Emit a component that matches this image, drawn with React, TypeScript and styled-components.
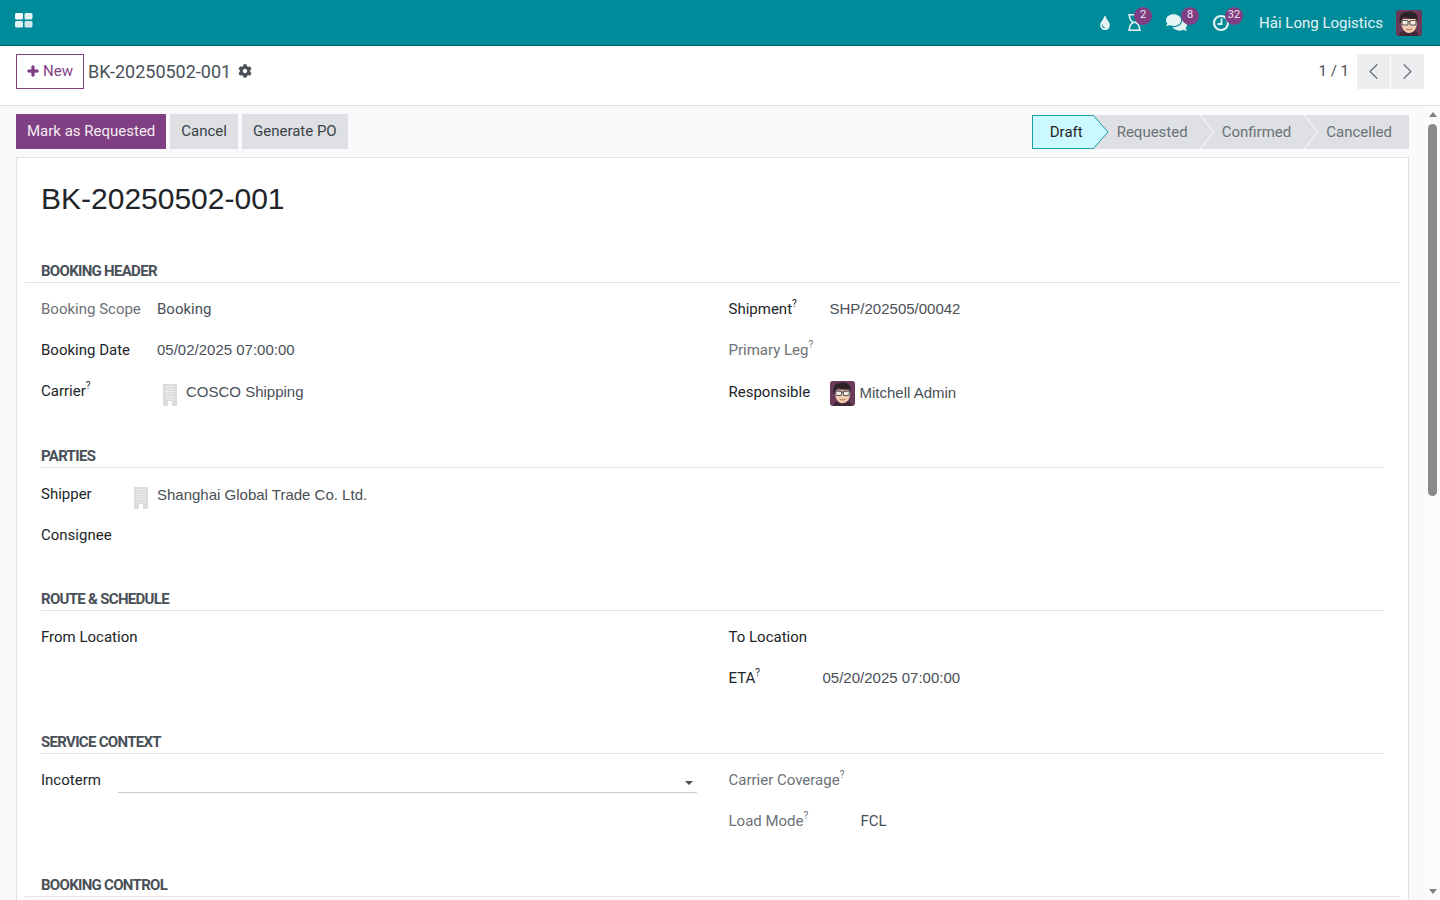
import styled, { createGlobalStyle } from "styled-components";
import { ReactNode } from "react";
import { FaCog, FaComments, FaPlus, FaRegHourglass, FaTint } from "react-icons/fa";
import { ChevronLeft, ChevronRight } from "lucide-react";

const GlobalStyle = createGlobalStyle`
  html, body {
    margin: 0;
    height: 100%;
    overflow: hidden;
  }
  body {
    font-family: Roboto, "Liberation Sans", sans-serif;
    font-size: 15px;
    color: #212529;
  }
  * {
    box-sizing: border-box;
  }
`;

const AppsIcon = () => (
  <svg width="18" height="15" viewBox="0 0 18 15">
    <rect x="0" y="0" width="8" height="6.5" rx="1.5" fill="#fff" />
    <rect x="9.500" y="0" width="8" height="6.5" rx="1.5" fill="#e3f3f4" />
    <rect x="0" y="8" width="8" height="6.5" rx="1.5" fill="#e3f3f4" />
    <rect x="9.500" y="8" width="8" height="6.5" rx="1.5" fill="#cfe9eb" />
  </svg>
);

const ClockIcon = () => (
  <svg width="18" height="18" viewBox="0 0 18 18" fill="none" stroke="currentColor">
    <circle cx="9" cy="9" r="7" strokeWidth="2.200" />
    <path d="M9.500 4.500V10H5.500" strokeWidth="1.800" />
  </svg>
);

const Avatar = ({ size }: { size: number }) => (
  <svg width={size} height={size} viewBox="0 0 26 26">
    <rect width="26" height="26" rx="3" fill="#6a3a58" />
    <path d="M3 26c1-4 4-6 10-6s9 2 10 6z" fill="#43293a" />
    <path d="M5 9c-.5 8 3 14.500 8.500 14s8-6 7.500-14z" fill="#f4cdb0" />
    <path d="M4 13C2 6 6 1.500 11 2c5-1.500 11 1 10.500 7.500l-.5 3.500-1.500-4.500C15 9 11 8.500 8 6.500 7.500 9 5.500 10 5 13z" fill="#2c2327" />
    <rect x="6" y="10.500" width="6" height="4.500" rx="1" fill="#f3ebe4" stroke="#55585c" strokeWidth="1.100" />
    <rect x="14" y="10.500" width="6" height="4.500" rx="1" fill="#f3ebe4" stroke="#55585c" strokeWidth="1.100" />
    <path d="M12 11.500h2" stroke="#55585c" strokeWidth="1.100" />
    <path d="M10 19c1.500 1 4 1 6 0" stroke="#a8614c" strokeWidth="1" fill="none" />
  </svg>
);

const BuildingIcon = () => (
  <BuildingSvg width="14" height="22" viewBox="0 0 14 22">
    <path d="M0 0h14v22H9v-5H5v5H0z" fill="#dcdcdc" />
    <path
      d="M2.500 2.500h9M2.500 5h9M2.500 7.500h9M2.500 10h9M2.500 12.500h9M2.500 15h9"
      stroke="#f1f1f1"
      strokeWidth="1"
      strokeDasharray="2.500 0.700"
    />
  </BuildingSvg>
);

const Arrow = ({ active }: { active?: boolean }) => (
  <ArrowSvg width="16" height="34" viewBox="0 0 16 34" $active={active}>
    {active ? (
      <>
        <path d="M0 0 15 17 0 34z" fill="#ccf9ff" />
        <path d="M0 0 15 17 0 34" fill="none" stroke="#17a2a8" strokeWidth="1" />
      </>
    ) : (
      <path d="M0 0 14 17 0 34" fill="#dee0e4" stroke="#fff" strokeWidth="1" />
    )}
  </ArrowSvg>
);

const steps = [
  { name: "Draft", left: 17, right: 10, active: true },
  { name: "Requested", left: 24, right: 12 },
  { name: "Confirmed", left: 22, right: 13 },
  { name: "Cancelled", left: 22, right: 17, last: true },
];

type FieldProps = {
  label: string;
  help?: boolean;
  muted?: boolean;
  low?: boolean;
  width: number;
  children?: ReactNode;
};

const Field = ({ label, help, muted, low, width, children }: FieldProps) => (
  <Row>
    <Label $muted={muted} $low={low} $width={width}>
      {label}
      {help && <Help>?</Help>}
    </Label>
    {children}
  </Row>
);

const Section = ({ title, wide, children }: { title: string; wide?: boolean; children?: ReactNode }) => (
  <SectionBox $wide={wide}>
    <SectionTitle $wide={wide}>{title}</SectionTitle>
    {children && <Columns>{children}</Columns>}
  </SectionBox>
);

export default function App() {
  return (
    <Page>
      <GlobalStyle />
      <Navbar>
        <AppsButton>
          <AppsIcon />
        </AppsButton>
        <Systray>
          <TrayItem $width={30}>
            <FaTint size={14} />
          </TrayItem>
          <TrayItem $width={29}>
            <FaRegHourglass size={17} />
            <Badge $right={-3}>2</Badge>
          </TrayItem>
          <TrayItem $width={57}>
            <CommentsIcon size={21} />
            <Badge $right={7}>8</Badge>
          </TrayItem>
          <TrayItem $width={30}>
            <ClockIcon />
            <Badge $right={-7}>32</Badge>
          </TrayItem>
          <Company>Hải Long Logistics</Company>
          <UserAvatar>
            <Avatar size={26} />
          </UserAvatar>
        </Systray>
      </Navbar>

      <ControlPanel>
        <Breadcrumb>
          <NewButton>
            <PlusIcon size={12} />
            New
          </NewButton>
          <RecordName>BK-20250502-001</RecordName>
          <GearIcon>
            <FaCog size={14} />
          </GearIcon>
        </Breadcrumb>
        <Pager>
          <PagerText>1 / 1</PagerText>
          <PagerButtons>
            <PagerButton>
              <ChevronLeft size={27} strokeWidth={1.1} />
            </PagerButton>
            <PagerButton>
              <ChevronRight size={27} strokeWidth={1.1} />
            </PagerButton>
          </PagerButtons>
        </Pager>
      </ControlPanel>

      <Body>
        <Content>
          <ActionBar>
            <Actions>
              <ActionButton $primary>Mark as Requested</ActionButton>
              <ActionButton>Cancel</ActionButton>
              <ActionButton>Generate PO</ActionButton>
            </Actions>
            <StatusBar>
              {steps.map((step) => (
                <Step key={step.name} $left={step.left} $right={step.right} $active={step.active}>
                  {step.name}
                  {!step.last && <Arrow active={step.active} />}
                </Step>
              ))}
            </StatusBar>
          </ActionBar>

          <Sheet>
            <Title>BK-20250502-001</Title>

            <Section title="BOOKING HEADER" wide>
              <Column>
                <Field label="Booking Scope" muted width={116}>
                  <Value>Booking</Value>
                </Field>
                <Field label="Booking Date" width={116}>
                  <ArialValue>05/02/2025 07:00:00</ArialValue>
                </Field>
                <Field label="Carrier" help width={116}>
                  <RelationValue $offset={6}>
                    <BuildingIcon />
                    <CompanyName>COSCO Shipping</CompanyName>
                  </RelationValue>
                </Field>
              </Column>
              <Column>
                <Field label="Shipment" help width={101}>
                  <ArialValue>SHP/202505/00042</ArialValue>
                </Field>
                <Field label="Primary Leg" help muted width={101} />
                <Field label="Responsible" low width={101}>
                  <RelationValue $offset={0} $avatar>
                    <Avatar size={25} />
                    <PersonName>Mitchell Admin</PersonName>
                  </RelationValue>
                </Field>
              </Column>
            </Section>

            <Section title="PARTIES">
              <Column>
                <Field label="Shipper" width={93}>
                  <RelationValue $offset={0}>
                    <BuildingIcon />
                    <CompanyName>Shanghai Global Trade Co. Ltd.</CompanyName>
                  </RelationValue>
                </Field>
                <Field label="Consignee" width={93} />
              </Column>
            </Section>

            <Section title="ROUTE & SCHEDULE">
              <Column>
                <Field label="From Location" width={120} />
              </Column>
              <Column>
                <Field label="To Location" width={94} />
                <Field label="ETA" help width={94}>
                  <ArialValue>05/20/2025 07:00:00</ArialValue>
                </Field>
              </Column>
            </Section>

            <Section title="SERVICE CONTEXT">
              <Column>
                <Field label="Incoterm" width={77}>
                  <SelectBox>
                    <Caret />
                  </SelectBox>
                </Field>
              </Column>
              <Column>
                <Field label="Carrier Coverage" help muted width={132} />
                <Field label="Load Mode" help muted width={132}>
                  <Value>FCL</Value>
                </Field>
              </Column>
            </Section>

            <Section title="BOOKING CONTROL" wide />
          </Sheet>
        </Content>

        <Scrollbar>
          <ScrollArrow $up />
          <ScrollTrack>
            <ScrollThumb />
          </ScrollTrack>
          <ScrollArrow />
        </Scrollbar>
      </Body>
    </Page>
  );
}

const Page = styled.div`
  display: flex;
  flex-direction: column;
  height: 900px;
  overflow: hidden;
  background: #f9fafb;
`;

const Navbar = styled.header`
  display: flex;
  align-items: center;
  justify-content: space-between;
  flex: none;
  height: 46px;
  background: #008b9b;
  border-bottom: 1px solid #00606b;
  color: #e6f3f4;
`;

const AppsButton = styled.div`
  display: flex;
  align-items: center;
  padding: 0 0 5px 15px;
`;

const Systray = styled.div`
  display: flex;
  align-items: center;
  padding-right: 18px;
`;

const TrayItem = styled.div<{ $width: number }>`
  position: relative;
  display: flex;
  align-items: center;
  justify-content: center;
  width: ${(p) => p.$width}px;
  height: 45px;
`;

const CommentsIcon = styled(FaComments)`
  margin-right: 2px;
`;

const Badge = styled.span<{ $right: number }>`
  position: absolute;
  top: 7px;
  right: ${(p) => p.$right}px;
  min-width: 18px;
  height: 18px;
  padding: 0 3px;
  border-radius: 9px;
  background: #803f82;
  color: #f0e4f0;
  font-size: 11px;
  line-height: 16px;
  text-align: center;
`;

const Company = styled.span`
  margin-left: 23px;
  padding-top: 1px;
`;

const UserAvatar = styled.div`
  display: flex;
  margin-left: 13px;
`;

const ControlPanel = styled.div`
  display: flex;
  align-items: flex-start;
  justify-content: space-between;
  flex: none;
  height: 60px;
  padding: 8px 16px 0;
  background: #fff;
  border-bottom: 1px solid #dee2e6;
`;

const Breadcrumb = styled.div`
  display: flex;
  align-items: center;
  height: 35px;
`;

const NewButton = styled.button`
  display: flex;
  align-items: center;
  gap: 4px;
  width: 68px;
  height: 35px;
  padding: 0 0 1px 10px;
  background: #fff;
  border: 1px solid #803f82;
  color: #803f82;
  font-family: inherit;
  font-size: 15px;
`;

const PlusIcon = styled(FaPlus)`
  stroke: currentColor;
  stroke-width: 40px;
`;

const RecordName = styled.span`
  margin: 0 0 1px 4px;
  color: #4a5158;
  font-size: 18px;
`;

const GearIcon = styled.span`
  display: flex;
  margin: 0 0 1px 7px;
  color: #4a5158;
`;

const Pager = styled.div`
  display: flex;
  align-items: center;
  gap: 8px;
`;

const PagerText = styled.span`
  padding-bottom: 2px;
  color: #4a5158;
  font-size: 15px;
`;

const PagerButtons = styled.div`
  display: flex;
  gap: 1px;
`;

const PagerButton = styled.div`
  display: flex;
  align-items: center;
  justify-content: center;
  width: 33px;
  height: 35px;
  background: #eceef0;
  color: #6b7177;
`;

const Body = styled.div`
  display: flex;
  flex: 1;
  min-height: 0;
`;

const Content = styled.main`
  flex: 1;
  min-width: 0;
  padding: 8px 16px 0;
`;

const ActionBar = styled.div`
  display: flex;
  align-items: flex-start;
  justify-content: space-between;
  height: 43px;
`;

const Actions = styled.div`
  display: flex;
  gap: 4px;
`;

const ActionButton = styled.button<{ $primary?: boolean }>`
  height: 35px;
  padding: 0 11px 2px;
  border: 0;
  background: ${(p) => (p.$primary ? "#803f82" : "#dee0e4")};
  color: ${(p) => (p.$primary ? "#f4ecf4" : "#3b4248")};
  font-family: inherit;
  font-size: 15px;
`;

const StatusBar = styled.div`
  display: flex;
  margin-top: 1px;
`;

const Step = styled.div<{ $left: number; $right: number; $active?: boolean }>`
  position: relative;
  display: flex;
  align-items: center;
  height: 34px;
  padding: 0 ${(p) => p.$right}px 0 ${(p) => p.$left}px;
  background: ${(p) => (p.$active ? "#ccf9ff" : "#dee0e4")};
  border: ${(p) => (p.$active ? "1px solid #17a2a8" : "0")};
  border-right: 0;
  color: ${(p) => (p.$active ? "#212529" : "#6c7278")};
`;

const ArrowSvg = styled.svg<{ $active?: boolean }>`
  position: absolute;
  top: ${(p) => (p.$active ? "-1px" : "0")};
  left: 100%;
  z-index: 1;
  overflow: visible;
`;

const Sheet = styled.section`
  width: 100%;
  height: 800px;
  padding: 0 24px;
  background: #fff;
  border: 1px solid #dee2e6;
`;

const Title = styled.h1`
  margin: 0;
  height: 104px;
  padding-top: 21px;
  font-family: "Liberation Sans", Arial, sans-serif;
  font-size: 30px;
  font-weight: 400;
  line-height: 40px;
  color: #212529;
`;

const SectionBox = styled.div<{ $wide?: boolean }>`
  margin-bottom: ${(p) => (p.$wide ? "35px" : "34px")};
`;

const SectionTitle = styled.h2<{ $wide?: boolean }>`
  margin: 0 ${(p) => (p.$wide ? "-16px" : "0")};
  padding: 0 ${(p) => (p.$wide ? "16px" : "0")} 2px;
  border-bottom: 1px solid #dee2e6;
  color: #495057;
  font-size: 15px;
  font-weight: 700;
  line-height: 18px;
  letter-spacing: -0.7px;
`;

const Columns = styled.div`
  display: grid;
  grid-template-columns: 1fr 1fr;
  column-gap: 32px;
  padding-top: 6px;
  min-height: 88px;
`;

const Column = styled.div`
  display: flex;
  flex-direction: column;
`;

const Row = styled.div`
  display: flex;
  align-items: flex-start;
  min-height: 41px;
  padding-top: 10px;
`;

const Label = styled.span<{ $muted?: boolean; $low?: boolean; $width: number }>`
  flex: none;
  width: ${(p) => p.$width}px;
  margin-top: ${(p) => (p.$low ? "1px" : "0")};
  color: ${(p) => (p.$muted ? "#6c7278" : "#212529")};
  line-height: 21px;
`;

const Help = styled.sup`
  position: relative;
  top: -1px;
  font-size: 10px;
  line-height: 0;
  vertical-align: super;
`;

const Value = styled.span`
  color: #495057;
  line-height: 21px;
`;

const ArialValue = styled(Value)`
  margin-top: -1px;
  font-family: "Liberation Sans", Arial, sans-serif;
`;

const CompanyName = styled(ArialValue)`
  margin-top: 0;
`;

const PersonName = styled(ArialValue)`
  margin-top: 1px;
`;

const RelationValue = styled.div<{ $offset: number; $avatar?: boolean }>`
  display: flex;
  align-items: flex-start;
  gap: ${(p) => (p.$avatar ? "5px" : "9px")};
  margin-left: ${(p) => p.$offset}px;
`;

const BuildingSvg = styled.svg`
  margin-top: 3px;
`;

const SelectBox = styled.div`
  flex: 1;
  position: relative;
  height: 23px;
  border-bottom: 1px solid #c9ccd0;
`;

const Caret = styled.span`
  position: absolute;
  right: 4px;
  top: 11px;
  border-left: 4px solid transparent;
  border-right: 4px solid transparent;
  border-top: 4px solid #495057;
`;

const Scrollbar = styled.aside`
  display: flex;
  flex: none;
  flex-direction: column;
  align-items: center;
  width: 15px;
  padding: 4px 0;
  background: #fbfbfc;
`;

const ScrollArrow = styled.span<{ $up?: boolean }>`
  flex: none;
  margin: 2px 0;
  border-left: 4.5px solid transparent;
  border-right: 4.5px solid transparent;
  ${(p) => (p.$up ? "border-bottom: 5px solid #7f7f7f;" : "border-top: 5px solid #7f7f7f;")}
`;

const ScrollTrack = styled.div`
  flex: 1;
  width: 9px;
  padding-top: 5px;
`;

const ScrollThumb = styled.div`
  width: 9px;
  height: 372px;
  border-radius: 5px;
  background: #8a8a8a;
`;
